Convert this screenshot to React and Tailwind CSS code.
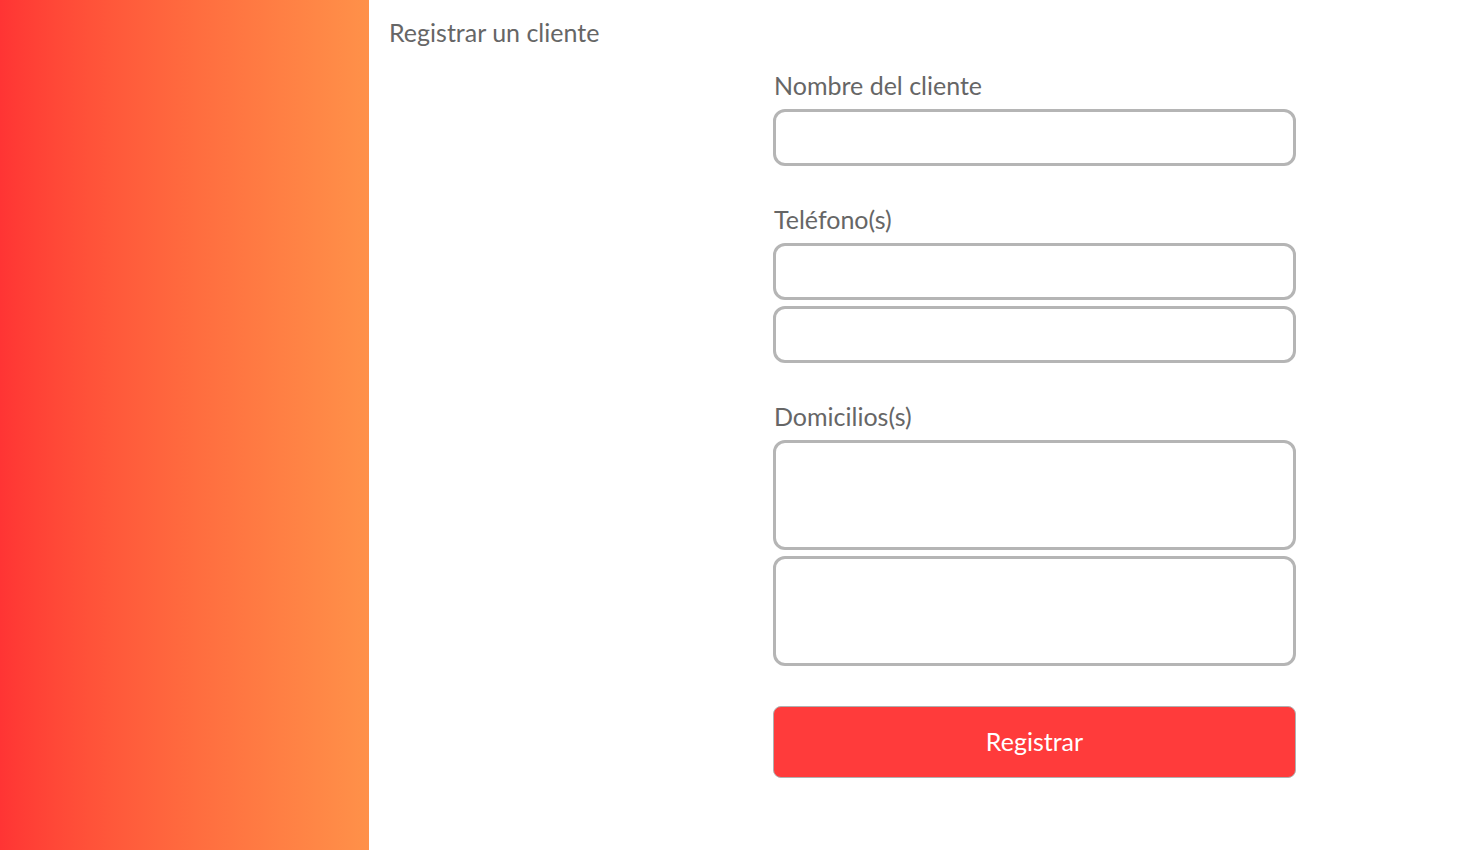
export default function App() {
  const field =
    'block w-full rounded-[12px] border-[3px] border-[#b5b5b5] bg-white outline-none';

  return (
    <div className="flex min-h-[850px] w-full bg-white font-['Lato',sans-serif] text-[#666666]">
      {/* Sidebar */}
      <aside className="w-[369px] shrink-0 bg-gradient-to-r from-[#ff3434] to-[#ff9149]" />

      {/* Main */}
      <main className="flex-1 pl-[20px] pt-[15px]">
        <h1 className="text-[25px] leading-[34px] font-normal">Registrar un cliente</h1>

        <form className="ml-[384px] mt-[19px] w-[523px]">
          <label className="block pl-[1px] text-[25px] leading-[34px]">Nombre del cliente</label>
          <input type="text" className={`${field} mt-[7px] h-[57px]`} />

          <label className="mt-[36px] block pl-[1px] text-[25px] leading-[34px]">Teléfono(s)</label>
          <input type="text" className={`${field} mt-[7px] h-[57px]`} />
          <input type="text" className={`${field} mt-[6px] h-[57px]`} />

          <label className="mt-[36px] block pl-[1px] text-[25px] leading-[34px]">Domicilios(s)</label>
          <textarea className={`${field} mt-[7px] h-[110px] resize-none`} />
          <textarea className={`${field} mt-[6px] h-[110px] resize-none`} />

          <button
            type="button"
            className="mt-[40px] flex h-[72px] w-full items-center justify-center rounded-[8px] border border-[#b0b0b0] bg-[#ff3b3b] text-[25px] text-white"
          >
            Registrar
          </button>
        </form>
      </main>
    </div>
  );
}
